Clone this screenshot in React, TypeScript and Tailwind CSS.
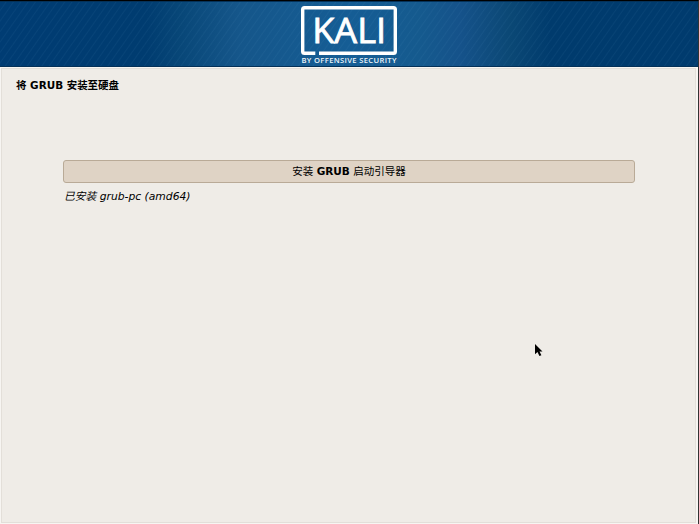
import React from "react";

const sans = "font-['DejaVu_Sans','Noto_Sans_CJK_SC',sans-serif]";

function Logo() {
  return (
    <svg width="98" height="60" viewBox="300 5 98 60" className="block" fill="none">
      <path d="M315.3 53.3H304.5Q302.7 53.3 302.7 51.5V9.5Q302.7 7.7 304.5 7.7H393.5Q395.3 7.7 395.3 9.5V51.5Q395.3 53.3 393.5 53.3H319" stroke="#fff" strokeWidth="3.4" />
      <text x="312.2" y="43" fontSize="34" fontWeight="500" fill="#fff" stroke="#fff" strokeWidth="0.8" textLength="74" lengthAdjust="spacingAndGlyphs" fontFamily="'Open Sans', sans-serif">KALI</text>
      <text x="301.5" y="63" fontSize="7.6" fontWeight="600" fill="#edf5fa" textLength="95" fontFamily="'Open Sans', sans-serif">BY OFFENSIVE SECURITY</text>
    </svg>
  );
}

function Pointer() {
  return (
    <svg width="10" height="14" viewBox="0 0 10 14" className="absolute left-[534px] top-[342px]">
      <path d="M1 1V11.3L3.5 9L5.4 13L7.4 12.2L5.5 8.4H8.5Z" fill="#000" />
    </svg>
  );
}

export default function App() {
  return (
    <div className={`relative flex h-[524px] w-[699px] flex-col overflow-hidden border-t border-r border-t-black border-r-[#333] bg-[#f7f5f2] text-black ${sans}`}>
      <header className="flex h-[66px] shrink-0 justify-center border-y border-y-[#043158] bg-[repeating-linear-gradient(125deg,transparent_0px,transparent_4px,rgba(110,170,210,0.07)_5px,transparent_6px),linear-gradient(90deg,#003c73_0%,#003c70_21%,#084778_26%,#15568a_34%,#155a90_43%,#155d95_50%,#155a8e_60%,#15528a_66%,#0b4875_73%,#003b6d_79%,#003b6e_100%)] pt-[3px]">
        <Logo />
      </header>
      <main className="mt-px mr-[2px] mb-px ml-px flex grow flex-col border border-[#e3dfd9] bg-[#efece7]">
        <h1 className="ml-[14px] mt-[9px] h-[15px] whitespace-pre text-[10.45px] leading-[15px] font-bold">将 GRUB 安装至硬盘</h1>
        <section className="mt-[67px] mr-[60px] ml-[61px]">
          <div className="flex h-[23px] items-center justify-center rounded-[3px] border border-[#b9aa97] bg-[#dfd3c5] text-[10.5px] leading-[15px]">
            <span className="whitespace-pre font-normal">安装 <b>GRUB</b> 启动引导器</span>
          </div>
          <p className="mt-[6px] ml-px h-[16px] whitespace-pre text-[10.75px] leading-[16px] italic">已安装 grub-pc (amd64)</p>
        </section>
      </main>
      <Pointer />
    </div>
  );
}
